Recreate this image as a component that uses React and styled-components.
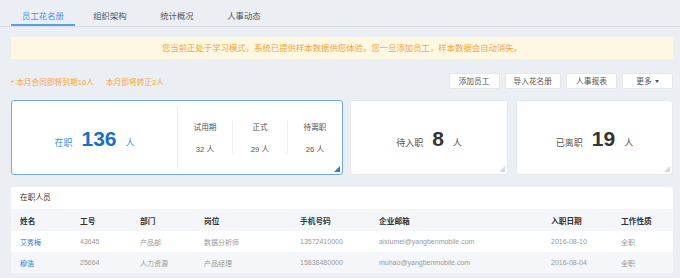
import React from 'react';
import styled, { createGlobalStyle } from 'styled-components';

const GlobalStyle = createGlobalStyle`
	html, body {
		margin: 0;
		padding: 0;
		background: #ebeef3;
	}
	body {
		font-family: "Liberation Sans", "Noto Sans CJK SC", sans-serif;
		color: #555;
	}
`;

const Page = styled.div`
	padding: 0 7px 0 11px;
	width: 662px;
`;

const TabBar = styled.div`
	display: flex;
	height: 26px;
	border-bottom: 1px solid #d9dde3;
	margin: 0 -7px 0 -11px;
	padding-left: 9px;
`;

const Tab = styled.div`
	box-sizing: border-box;
	width: 64px;
	margin-right: 3px;
	height: 26px;
	padding-top: 10px;
	line-height: 12px;
	font-size: 8.4px;
	text-align: center;
	color: ${props => (props.active ? '#3b94e5' : '#555')};
	border-bottom: 2px solid ${props => (props.active ? '#4ea3ea' : 'transparent')};
	&:first-child {
		margin-left: 2px;
	}
`;

const Notice = styled.div`
	margin-top: 10px;
	height: 22px;
	line-height: 22px;
	background: #fef8e3;
	border-radius: 2px;
	text-align: center;
	font-size: 8.4px;
	color: #f4a33c;
`;

const Toolbar = styled.div`
	margin-top: 14px;
	display: flex;
	align-items: center;
	justify-content: space-between;
	height: 16px;
`;

const Hint = styled.div`
	font-size: 7.7px;
	color: #f5a541;
	span + span {
		margin-left: 12px;
	}
`;

const Buttons = styled.div`
	display: flex;
	gap: 5px;
`;

const Button = styled.div`
	box-sizing: border-box;
	min-width: 51px;
	height: 16px;
	line-height: 15px;
	padding: 0 8px;
	background: #fff;
	border: 1px solid #e3e6eb;
	border-radius: 2px;
	font-size: 7.7px;
	color: #555;
	text-align: center;
`;

const Caret = styled.span`
	display: inline-block;
	margin-left: 3px;
	vertical-align: middle;
	border-left: 2.5px solid transparent;
	border-right: 2.5px solid transparent;
	border-top: 3px solid #555;
`;

const Cards = styled.div`
	margin-top: 11px;
	display: grid;
	grid-template-columns: 332px 158px 1fr;
	column-gap: 7px;
	height: 75px;
	& > :nth-child(3) {
		margin-left: 1px;
	}
`;

const Card = styled.div`
	position: relative;
	box-sizing: border-box;
	background: #fff;
	border: 1px solid ${props => (props.active ? '#6eaae2' : '#e6e9ee')};
	border-radius: 3px;
	display: flex;
	align-items: stretch;
	&::after {
		content: '';
		position: absolute;
		right: 2px;
		bottom: 2px;
		width: 0;
		height: 0;
		border-left: 6px solid transparent;
		border-bottom: 6px solid ${props => (props.active ? '#2d7bd0' : '#d6d9de')};
	}
`;

const Main = styled.div`
	flex: ${props => (props.fixed ? '0 0 165px' : '1')};
	display: flex;
	align-items: baseline;
	justify-content: center;
	padding-top: 26px;
	box-sizing: border-box;
`;

const Label = styled.span`
	font-size: 9px;
	color: ${props => (props.blue ? '#3f8fdc' : '#555')};
`;

const Count = styled.span`
	font-size: 21px;
	font-weight: bold;
	margin: 0 9px;
	color: ${props => (props.blue ? '#1b6fc4' : '#333')};
`;

const Divider = styled.div`
	width: 1px;
	margin: 5px 0;
	background: #ececec;
`;

const Breakdown = styled.div`
	flex: 1;
	display: flex;
	align-items: center;
`;

const Part = styled.div`
	flex: 1;
	height: 33px;
	display: flex;
	flex-direction: column;
	align-items: center;
	justify-content: space-between;
	font-size: 7.7px;
	color: #555;
	& + & {
		border-left: 1px solid #efefef;
	}
`;

const Panel = styled.div`
	margin-top: 12px;
	background: #fff;
	border-radius: 3px 3px 0 0;
`;

const PanelTitle = styled.div`
	height: 22px;
	line-height: 22px;
	padding-left: 9px;
	font-size: 7.7px;
	color: #333;
`;

const Table = styled.table`
	width: 100%;
	table-layout: fixed;
	border-collapse: collapse;
`;

const Th = styled.th`
	height: 22px;
	padding: 0;
	text-align: left;
	font-size: 7.7px;
	font-weight: bold;
	color: #333;
	background: #f4f6f9;
	&:first-child {
		padding-left: 9px;
	}
`;

const Row = styled.tr`
	background: ${props => (props.striped ? '#f4f6f9' : '#fff')};
`;

const Td = styled.td`
	height: 21px;
	padding: 0;
	font-size: 7px;
	color: ${props => (props.link ? '#2f80d4' : '#999')};
	white-space: nowrap;
	&:first-child {
		padding-left: 9px;
	}
`;

const tabs = ['员工花名册', '组织架构', '统计概况', '人事动态'];

const columns = [
	['姓名', 69],
	['工号', 60],
	['部门', 64],
	['岗位', 96],
	['手机号码', 79],
	['企业邮箱', 172],
	['入职日期', 70],
	['工作性质', 52]
];

const staff = [
	['艾秀梅', '43645', '产品部', '数据分析师', '13572410000', 'aixiumei@yangbenmobile.com', '2016-08-10', '全职'],
	['穆浩', '25664', '人力资源', '产品经理', '15838480000', 'muhao@yangbenmobile.com', '2016-08-04', '全职']
];

const breakdown = [
	['试用期', 32],
	['正式', 29],
	['待离职', 26]
];

export default function App() {
	return (
		<React.Fragment>
			<GlobalStyle />
			<Page>
				<TabBar>
					{tabs.map((tab, index) => (
						<Tab key={tab} active={index === 0}>
							{tab}
						</Tab>
					))}
				</TabBar>

				<Notice>
					您当前正处于学习模式，系统已提供样本数据供您体验。您一旦添加员工，样本数据会自动消失。
				</Notice>

				<Toolbar>
					<Hint>
						<span>* 本月合同即将到期16人</span>
						<span>本月即将转正2人</span>
					</Hint>
					<Buttons>
						<Button>添加员工</Button>
						<Button>导入花名册</Button>
						<Button>人事报表</Button>
						<Button>
							更多
							<Caret />
						</Button>
					</Buttons>
				</Toolbar>

				<Cards>
					<Card active>
						<Main fixed>
							<Label blue>在职</Label>
							<Count blue>136</Count>
							<Label blue>人</Label>
						</Main>
						<Divider />
						<Breakdown>
							{breakdown.map(([name, value]) => (
								<Part key={name}>
									<span>{name}</span>
									<span>{value} 人</span>
								</Part>
							))}
						</Breakdown>
					</Card>
					<Card>
						<Main>
							<Label>待入职</Label>
							<Count>8</Count>
							<Label>人</Label>
						</Main>
					</Card>
					<Card>
						<Main>
							<Label>已离职</Label>
							<Count>19</Count>
							<Label>人</Label>
						</Main>
					</Card>
				</Cards>

				<Panel>
					<PanelTitle>在职人员</PanelTitle>
					<Table>
						<colgroup>
							{columns.map(([name, width]) => (
								<col key={name} style={{ width }} />
							))}
						</colgroup>
						<thead>
							<tr>
								{columns.map(([name]) => (
									<Th key={name}>{name}</Th>
								))}
							</tr>
						</thead>
						<tbody>
							{staff.map((person, index) => (
								<Row key={person[1]} striped={index % 2 === 1}>
									{person.map((value, i) => (
										<Td key={i} link={i === 0}>
											{value}
										</Td>
									))}
								</Row>
							))}
						</tbody>
					</Table>
				</Panel>
			</Page>
		</React.Fragment>
	);
}
